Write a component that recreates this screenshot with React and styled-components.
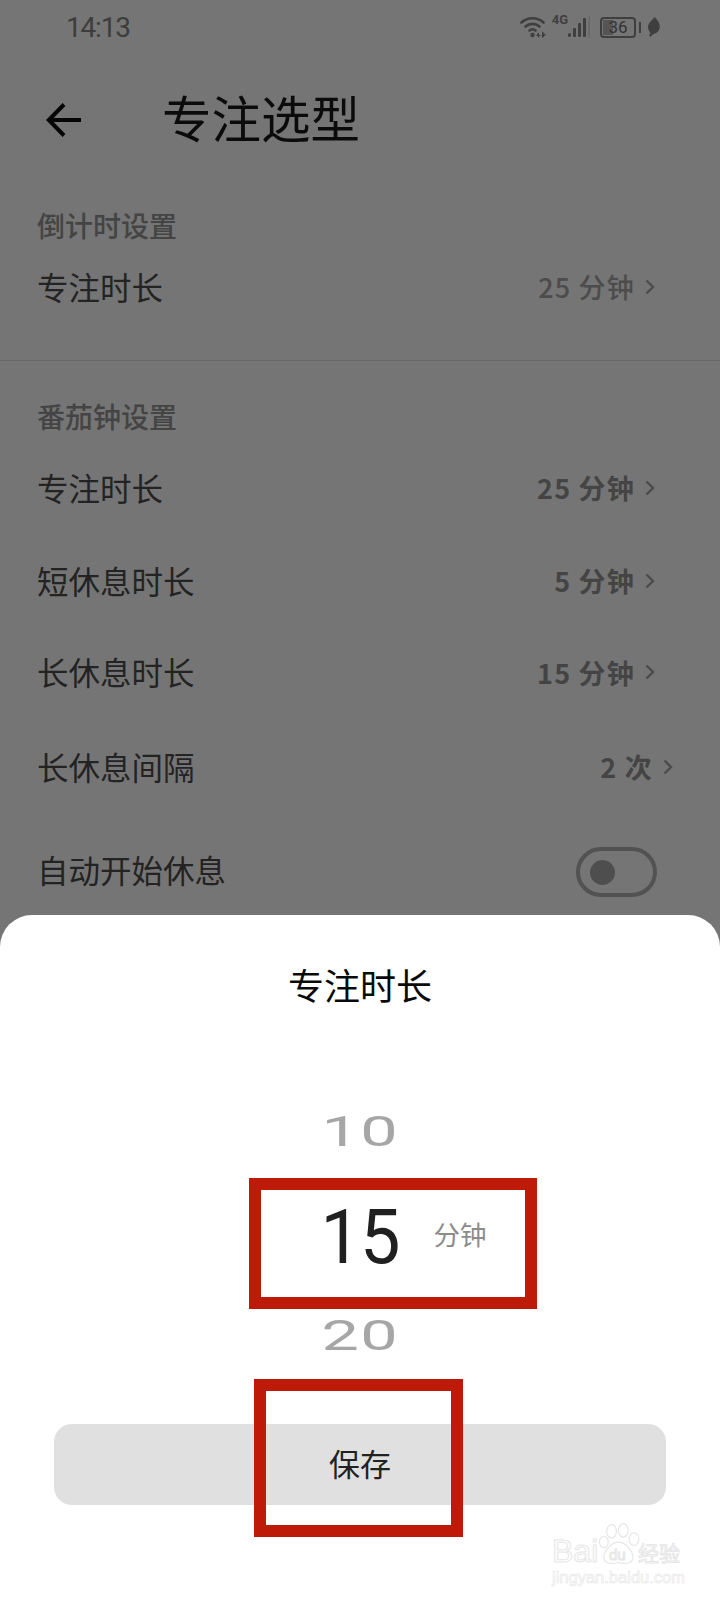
import React from "react";
import styled, { createGlobalStyle } from "styled-components";

const cjk = `"Noto Sans CJK SC", "Noto Sans", sans-serif`;

const Global = createGlobalStyle`
  html, body { margin: 0; padding: 0; background: #757575; }
  * { box-sizing: border-box; }
`;

const Page = styled.div`
  position: relative;
  width: 720px;
  height: 1600px;
  overflow: hidden;
  background: #757575;
  font-family: ${cjk};
`;

const Behind = styled.div`
  height: 915px;
  overflow: hidden;
`;

const StatusBar = styled.div`
  height: 54px;
  padding: 0 60px 0 66px;
  display: flex;
  align-items: center;
  justify-content: space-between;
`;

const Clock = styled.span`
  font-family: Roboto, sans-serif;
  font-size: 28px;
  letter-spacing: -1.2px;
  color: #3d3d3d;
`;

const StatusIcons = styled.div`
  display: flex;
  align-items: center;
  color: #3f3f3f;
`;

const NetLabel = styled.span`
  align-self: flex-start;
  margin: -3px 0 0 6px;
  font-family: Roboto, sans-serif;
  font-size: 13px;
  font-weight: 700;
  line-height: 14px;
`;

const Battery = styled.div`
  position: relative;
  width: 36px;
  height: 21px;
  margin-left: 10px;
  border: 2px solid #3f3f3f;
  border-radius: 4px;
  display: flex;
  align-items: center;
  justify-content: center;
  font-family: Roboto, sans-serif;
  font-size: 17px;
  line-height: 1;
  color: #333;
`;

const BatteryFill = styled.div`
  position: absolute;
  left: 1px;
  top: 1px;
  bottom: 1px;
  width: 10px;
  background: #555;
`;

const BatteryNum = styled.span`
  position: relative;
`;

const BatteryNub = styled.div`
  width: 2px;
  height: 11px;
  margin: 0 6px 0 3px;
  background: #3f3f3f;
`;

const Header = styled.div`
  height: 132px;
  padding-left: 46px;
  display: flex;
  align-items: center;
`;

const Title = styled.h1`
  margin: 0 0 0 81px;
  padding-bottom: 6px;
  font-size: 49.5px;
  line-height: 60px;
  font-weight: 400;
  color: #0b0b0b;
`;

const SectionLabel = styled.div`
  height: 40px;
  margin-top: ${(p) => p.$top}px;
  padding-left: 37px;
  font-size: 28px;
  line-height: 40px;
  font-weight: 500;
  color: #444;
`;

const Divider = styled.div`
  height: 1px;
  margin-top: 29px;
  background: #686868;
`;

const Row = styled.div`
  height: ${(p) => p.$h}px;
  padding: 0 ${(p) => p.$right}px 0 37px;
  display: flex;
  align-items: center;
  justify-content: space-between;
`;

const RowList = styled.div`
  margin-top: 6px;
`;

const RowLabel = styled.span`
  padding-bottom: 5px;
  font-size: 31.5px;
  color: #232323;
`;

const RowValue = styled.div`
  display: flex;
  align-items: center;
  gap: 10px;
  padding-bottom: 3px;
  font-size: 27px;
  letter-spacing: 1.2px;
  font-weight: ${(p) => (p.$bold ? 700 : 500)};
  color: ${(p) => (p.$bold ? "#444" : "#4c4c4c")};
`;

const Toggle = styled.div`
  width: 81px;
  height: 50px;
  margin: 2px -12px 0 0;
  padding-left: 10px;
  border: 4px solid #525252;
  border-radius: 25px;
  display: flex;
  align-items: center;
`;

const Knob = styled.div`
  width: 25px;
  height: 25px;
  border-radius: 50%;
  background: #4e4e4e;
`;

const Sheet = styled.div`
  position: relative;
  height: 685px;
  padding-top: 44px;
  background: #fff;
  border-radius: 32px 32px 0 0;
`;

const SheetTitle = styled.div`
  height: 50px;
  font-size: 36px;
  line-height: 50px;
  text-align: center;
  color: #0a0a0a;
`;

const Wheel = styled.div`
  margin-top: 81px;
  display: flex;
  flex-direction: column;
`;

const SideNumber = styled.div`
  height: ${(p) => p.$h}px;
  display: flex;
  align-items: center;
  justify-content: center;
  font-family: Roboto, sans-serif;
  font-size: 52px;
  line-height: 1;
  color: #a6a6a6;
  span {
    display: inline-block;
    letter-spacing: 1px;
    transform: scale(1.28, 0.8);
  }
`;

const CurrentRow = styled.div`
  height: 131px;
  padding-bottom: 3px;
  display: grid;
  grid-template-columns: 1fr auto 1fr;
  align-items: center;
`;

const CurrentNumber = styled.span`
  grid-column: 2;
  display: inline-block;
  font-family: Roboto, sans-serif;
  font-size: 72px;
  line-height: 1;
  letter-spacing: -1px;
  color: #202020;
  transform: scaleY(1.06);
`;

const Unit = styled.span`
  margin-left: 34px;
  padding-bottom: 10px;
  font-size: 26.5px;
  color: #8c8c8c;
`;

const SaveButton = styled.div`
  height: 81px;
  margin: 57px 54px 0;
  padding-bottom: 4px;
  border-radius: 18px;
  background: #e0e0e0;
  display: flex;
  align-items: center;
  justify-content: center;
  font-size: 31px;
  color: #222;
`;

const RedFrame = styled.div`
  position: absolute;
  left: ${(p) => p.$x}px;
  top: ${(p) => p.$y}px;
  width: ${(p) => p.$w}px;
  height: ${(p) => p.$hgt}px;
  border: 12px solid #bd1a08;
`;

const Watermark = styled.div`
  position: absolute;
  right: 40px;
  bottom: 15px;
  width: 128px;
  color: transparent;
  -webkit-text-stroke: 1px #e6e6e6;
`;

const MarkTop = styled.div`
  position: relative;
  height: 44px;
  display: flex;
  align-items: flex-end;
  font-family: "Liberation Sans", sans-serif;
  font-size: 32px;
  line-height: 30px;
`;

const MarkDu = styled.span`
  position: absolute;
  left: 57px;
  bottom: 3px;
  font-size: 15px;
  line-height: 16px;
`;

const MarkCn = styled.span`
  margin-left: -3px;
  font-family: ${cjk};
  font-size: 21px;
  line-height: 28px;
  white-space: nowrap;
`;

const MarkUrl = styled.div`
  margin-top: 3px;
  font-family: "Liberation Sans", sans-serif;
  font-size: 16.5px;
  line-height: 16px;
  white-space: nowrap;
  -webkit-text-stroke: 0.6px #e6e6e6;
`;

function Wifi() {
  return (
    <svg width="26" height="22" viewBox="0 0 26 22" fill="none" stroke="#3f3f3f" strokeWidth="2.6" strokeLinecap="round">
      <path d="M1.5 6.5C7.5 .8 17.5 .8 23.5 6.5" />
      <path d="M5.5 10.5C9.5 7 15.5 7 19.5 10.5" />
      <path d="M9.5 14.5C11.3 13 13.7 13 15.5 14.5" />
      <circle cx="12.5" cy="19" r="2.2" fill="#3f3f3f" stroke="none" />
      <path d="M18.5 21V17L16.8 19.5H20M22.5 16.5V21.5L25 19Z" stroke="#3f3f3f" strokeWidth="1" fill="#3f3f3f" />
    </svg>
  );
}

function Bars() {
  return (
    <svg width="22" height="22" viewBox="0 0 22 22" fill="#3f3f3f">
      <rect x="0" y="17" width="3" height="4" rx="1.5" />
      <rect x="5" y="12" width="3" height="9" rx="1" />
      <rect x="10" y="7" width="3" height="14" rx="1" />
      <rect x="15" y="2" width="3" height="19" rx="1" />
      <rect x="20.5" y="0" width="1.5" height="22" fill="#666" />
    </svg>
  );
}

function Leaf() {
  return (
    <svg width="13" height="20" viewBox="0 0 13 20" fill="#3f3f3f">
      <path d="M7.5 0C12 4 13.5 8 12.5 11.5C11.8 14.5 9.5 16.5 6.5 17L3 20L2.2 18.5L3.5 16C1 13 .2 9.5 2 6.5C3.2 4.3 6 2.5 7.5 0Z" />
    </svg>
  );
}

function BackArrow() {
  return (
    <svg width="35" height="34" viewBox="0 0 35 34" fill="none" stroke="#050505" strokeWidth="4">
      <path d="M35 17H3" />
      <path d="M18 1.5L2.8 17L18 32.5" />
    </svg>
  );
}

function Chevron() {
  return (
    <svg width="10" height="16" viewBox="0 0 10 16" fill="none" stroke="#4c4c4c" strokeWidth="2.4">
      <path d="M1.5 1.5L8 8L1.5 14.5" />
    </svg>
  );
}

function Paw() {
  return (
    <svg width="44" height="44" viewBox="0 0 44 44" fill="none" stroke="#e6e6e6" strokeWidth="1.2">
      <ellipse cx="14" cy="9" rx="5" ry="7" />
      <ellipse cx="26" cy="8" rx="5" ry="7" />
      <ellipse cx="37" cy="17" rx="5" ry="6.5" />
      <ellipse cx="6" cy="20" rx="4.5" ry="6" />
      <path d="M21 20C28 20 36 29 36 36C36 42 29 43 21 41C13 43 6 42 6 36C6 29 14 20 21 20Z" />
    </svg>
  );
}

const pomodoro = [
  { label: "专注时长", value: "25 分钟", h: 94, right: 65 },
  { label: "短休息时长", value: "5 分钟", h: 92, right: 65 },
  { label: "长休息时长", value: "15 分钟", h: 91, right: 65 },
  { label: "长休息间隔", value: "2 次", h: 98, right: 47 },
];

export default function App() {
  return (
    <Page>
      <Global />
      <Behind>
        <StatusBar>
          <Clock>14:13</Clock>
          <StatusIcons>
            <Wifi />
            <NetLabel>4G</NetLabel>
            <Bars />
            <Battery>
              <BatteryFill />
              <BatteryNum>36</BatteryNum>
            </Battery>
            <BatteryNub />
            <Leaf />
          </StatusIcons>
        </StatusBar>
        <Header>
          <BackArrow />
          <Title>专注选型</Title>
        </Header>

        <SectionLabel $top={19}>倒计时设置</SectionLabel>
        <Row $h={86} $right={65}>
          <RowLabel>专注时长</RowLabel>
          <RowValue>
            25 分钟
            <Chevron />
          </RowValue>
        </Row>
        <Divider />

        <SectionLabel $top={35}>番茄钟设置</SectionLabel>
        <RowList>
          {pomodoro.map((r) => (
            <Row key={r.label} $h={r.h} $right={r.right}>
              <RowLabel>{r.label}</RowLabel>
              <RowValue $bold>
                {r.value}
                <Chevron />
              </RowValue>
            </Row>
          ))}
          <Row $h={108} $right={75}>
            <RowLabel>自动开始休息</RowLabel>
            <Toggle>
              <Knob />
            </Toggle>
          </Row>
        </RowList>
      </Behind>

      <Sheet>
        <SheetTitle>专注时长</SheetTitle>
        <Wheel>
          <SideNumber $h={84}>
            <span>10</span>
          </SideNumber>
          <CurrentRow>
            <CurrentNumber>15</CurrentNumber>
            <Unit>分钟</Unit>
          </CurrentRow>
          <SideNumber $h={62}>
            <span>20</span>
          </SideNumber>
        </Wheel>
        <SaveButton>保存</SaveButton>
        <RedFrame $x={249} $y={263} $w={288} $hgt={131} />
        <RedFrame $x={254} $y={464} $w={209} $hgt={158} />
        <Watermark>
          <MarkTop>
            Bai
            <Paw />
            <MarkDu>du</MarkDu>
            <MarkCn>经验</MarkCn>
          </MarkTop>
          <MarkUrl>jingyan.baidu.com</MarkUrl>
        </Watermark>
      </Sheet>
    </Page>
  );
}
